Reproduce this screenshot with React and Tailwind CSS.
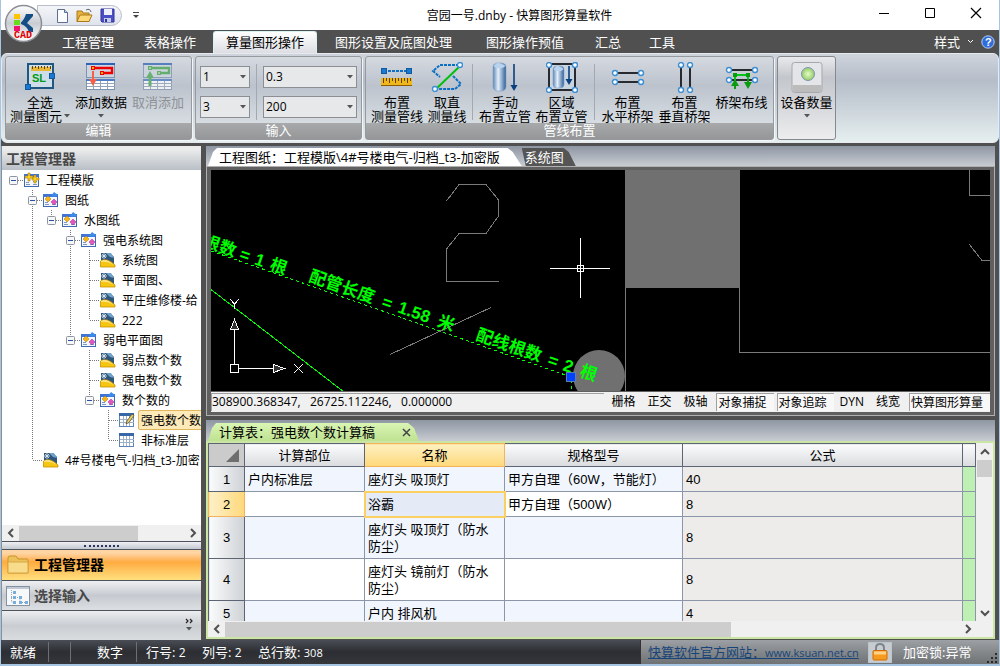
import { clsx } from "clsx";

const ui = "font-['Open_Sans','Noto_Sans_CJK_SC',sans-serif]";
const plain = "font-['Liberation_Sans','Noto_Sans_CJK_SC',sans-serif]";

/* ---------- ribbon icons ---------- */

function Dot({ x, y, r = 2.5 }) {
  return <circle cx={x} cy={y} r={r} fill="#fff" stroke="#3d8fd4" strokeWidth="1.4" />;
}

function SelectAllIcon() {
  return (
    <svg width="30" height="29" viewBox="0 0 30 29">
      <rect x="3" y="2" width="25" height="24" fill="#cfdde8" stroke="#1f5780" strokeWidth="2" />
      <rect x="6" y="5" width="20" height="4" fill="#e8b733" />
      <path d="M7.500 4v3M10.500 4v2M13.500 4v3M16.500 4v2M19.500 4v3M22.500 4v2M25.500 4v3" stroke="#5e4300" />
      <text x="7" y="20" fontSize="11" fontWeight="bold" fill="#009b14" fontFamily="Liberation Sans">
        SL
      </text>
      <rect x="0.500" y="22.500" width="5" height="5" fill="#1779d1" stroke="#135a9c" />
      <rect x="24.500" y="11.500" width="5" height="5" fill="#1779d1" stroke="#135a9c" />
    </svg>
  );
}

function DataIcon({ up }) {
  const line = up ? "#43a34d" : "#f00000";
  const node = up ? "#9fd08f" : "#ffb000";
  return (
    <svg width="30" height="29" viewBox="0 0 30 29" opacity={up ? 0.75 : 1}>
      <rect x="0.500" y="2.500" width="28" height="13" fill="#cdd6df" stroke="#7d93b2" />
      <rect x="0" y="1" width="29" height="2" fill="#2f63b5" />
      <rect x="0.500" y="17.500" width="28" height="10" fill="#fff" stroke="#7d93b2" />
      <rect x="0" y="17" width="29" height="2" fill="#4b7cc4" />
      <path d="M1 21.500h28M1 24.500h28M7.500 19v8M14.500 19v8M21.500 19v8" stroke="#93a3b8" />
      <path d="M7 6h19v5H15" fill="none" stroke={line} strokeWidth="2.4" />
      <rect x="5.500" y="4.500" width="3" height="3" fill={node} stroke={line} />
      <rect x="14.500" y="9.500" width="3" height="3" fill={node} stroke={line} />
      {up ? (
        <path d="M5.500 24V16H3l4-7 4 7H8.500v8z" fill="#4aa855" />
      ) : (
        <path d="M6 9h2v8h3l-4 7-4-7h3z" fill="#f4604a" />
      )}
    </svg>
  );
}

function MeasureIcon() {
  return (
    <svg width="32" height="29" viewBox="0 0 32 29">
      <path d="M3 9h26" stroke="#1170c4" strokeWidth="2" strokeDasharray="3 1" />
      <rect x="0.500" y="6.500" width="5" height="5" fill="#1779d1" stroke="#135a9c" />
      <rect x="25.500" y="6.500" width="5" height="5" fill="#1779d1" stroke="#135a9c" />
      <rect x="0" y="16" width="31" height="8" fill="#f0b71c" />
      <path
        d="M2.500 16v5M5.500 16v3M8.500 16v5M11.500 16v3M14.500 16v5M17.500 16v3M20.500 16v5M23.500 16v3M26.500 16v5M29.500 16v3"
        stroke="#5e4300"
      />
      <path d="M0 23.500h31" stroke="#8a5d00" />
    </svg>
  );
}

function StraightenIcon() {
  return (
    <svg width="32" height="30" viewBox="0 0 32 30">
      <path
        d="M28 3H9L2 9l7 6M22 14l8 8-6 5H5"
        fill="none"
        stroke="#0b6fc4"
        strokeWidth="2"
        strokeDasharray="3 1"
      />
      <path d="M5 27L29 4" stroke="#00bf10" strokeWidth="2" />
      <Dot x={29} y={3} />
      <Dot x={4} y={27} />
    </svg>
  );
}

function Cylinder({ x, y, w, h }) {
  return (
    <g>
      <rect x={x} y={y} width={w} height={h} rx={w / 3} fill="url(#pipe)" stroke="#7fa3cb" strokeWidth="0.600" />
      <ellipse cx={x + w / 2} cy={y + 3} rx={w / 2 - 1} ry="2" fill="#b7d3ef" />
    </g>
  );
}

function PipeIcon({ framed }) {
  return (
    <svg width="32" height="31" viewBox="0 0 32 31">
      <defs>
        <linearGradient id="pipe">
          <stop offset="0" stopColor="#5f86b4" />
          <stop offset="0.400" stopColor="#e4f0fc" />
          <stop offset="1" stopColor="#2f5e97" />
        </linearGradient>
      </defs>
      {framed ? (
        <g>
          <rect x="3" y="2" width="26" height="26" fill="#c9d5e1" stroke="#272b30" strokeWidth="2" />
          <Cylinder x={7} y={4} w={11} h={22} />
          <path d="M23 4v14" stroke="#0a3f80" strokeWidth="1.600" />
          <path d="M19.500 17h7l-3.500 6z" fill="#0a3f80" />
          <Dot x={3} y={3} />
          <Dot x={29} y={3} />
          <Dot x={3} y={28} />
          <Dot x={29} y={28} />
        </g>
      ) : (
        <g>
          <Cylinder x={4} y={1} w={13} h={28} />
          <path d="M25 2v22" stroke="#0a3f80" strokeWidth="1.600" />
          <path d="M21.500 23h7L25 29z" fill="#0a3f80" />
        </g>
      )}
    </svg>
  );
}

function TrayIcon({ kind }) {
  return (
    <svg width="34" height="31" viewBox="0 0 34 31">
      {kind === "vertical" && (
        <g>
          <path d="M13 3v24M22 3v24" stroke="#272b30" strokeWidth="2" />
          <Dot x={13} y={3} />
          <Dot x={22} y={3} />
          <Dot x={13} y={28} />
          <Dot x={22} y={28} />
        </g>
      )}
      {kind === "horizontal" && (
        <g>
          <path d="M4 11h26M4 20h26" stroke="#272b30" strokeWidth="2" />
          <Dot x={4} y={11} />
          <Dot x={30} y={11} />
          <Dot x={4} y={20} />
          <Dot x={30} y={20} />
        </g>
      )}
      {kind === "wire" && (
        <g>
          <path d="M4 8h26M4 18h26" stroke="#272b30" strokeWidth="2" />
          <Dot x={4} y={8} />
          <Dot x={30} y={8} />
          <Dot x={4} y={18} />
          <Dot x={30} y={18} />
          <path d="M10 20v-7h13v7" fill="none" stroke="#00c818" strokeWidth="2" />
          <path d="M10 17l-4 7h3v3h2v-3h3zM23 27l-4-7h3v-3h2v3h3z" fill="#0a9b10" />
          <path d="M8 11h4v4H8zM21 11h4v4h-4z" fill="#0a9b10" />
        </g>
      )}
    </svg>
  );
}

function DeviceIcon() {
  return (
    <svg width="32" height="31" viewBox="0 0 32 31">
      <defs>
        <radialGradient id="lamp">
          <stop offset="0" stopColor="#e6fbc8" />
          <stop offset="1" stopColor="#90cc64" />
        </radialGradient>
      </defs>
      <rect x="1" y="0.500" width="30" height="30" rx="2.500" fill="#e3e5e8" stroke="#a5a8ad" />
      <path d="M1.500 23h29v5q0 2-2 2h-25q-2 0-2-2z" fill="#bcbcbd" />
      <circle cx="17" cy="12" r="6.500" fill="url(#lamp)" stroke="#8493b5" />
    </svg>
  );
}

/* ---------- title bar & tabs ---------- */

function Logo() {
  return (
    <button aria-label="应用程序菜单" className="absolute left-[3px] top-[4px] z-10">
      <svg width="39" height="39" viewBox="0 0 39 39">
        <defs>
          <linearGradient id="orb" x2="0" y2="1">
            <stop offset="0" stopColor="#fff" />
            <stop offset="0.500" stopColor="#c9ccd1" />
            <stop offset="1" stopColor="#fff" />
          </linearGradient>
        </defs>
        <circle cx="19.500" cy="19.500" r="18" fill="url(#orb)" stroke="#8b8f95" strokeWidth="1.500" />
        <rect x="10" y="10" width="6" height="5" fill="#ffc400" />
        <rect x="10" y="16" width="6" height="5" fill="#6bdc1d" />
        <rect x="10" y="22" width="6" height="5" fill="#f0146e" />
        <path d="M17 18.500Q20 16 22 10h7v2l-6 7 6 5v4h-4Q23 22 17 20z" fill="#134f86" />
        <text x="10" y="34" fontSize="10" fontWeight="bold" fill="#e00000" fontFamily="Liberation Mono">
          CAD
        </text>
      </svg>
    </button>
  );
}

function TitleBar() {
  return (
    <header className="relative flex h-[30px] shrink-0 bg-white">
      <Logo />
      <div className="flex w-[177px] shrink-0 items-start pl-9">
        <div className="mt-[5px] flex h-[21px] w-[85px] items-center gap-[7px] rounded-r-full border border-[#b9bfca] bg-linear-to-b from-[#f4f5f8] to-[#dfe3ec] pl-[18px]">
          <button aria-label="新建">
            <svg width="13" height="16" viewBox="0 0 13 16">
              <path d="M1.500 1.500h7l3 3v10h-10z" fill="#fbfcff" stroke="#5f6e8e" />
              <path d="M8.500 1.500v3h3" fill="#c6d4ea" stroke="#5f6e8e" />
            </svg>
          </button>
          <button aria-label="打开">
            <svg width="17" height="15" viewBox="0 0 17 15">
              <path d="M1 13.500V3h5l1 2h6v8.500z" fill="#e8b23e" stroke="#a87a1b" />
              <path d="M1 13.500L4 7h12l-3 6.500z" fill="#ffd877" stroke="#a87a1b" />
              <path d="M10 2q4-2 5 2" fill="none" stroke="#54606f" />
            </svg>
          </button>
          <button aria-label="保存">
            <svg width="15" height="15" viewBox="0 0 15 15">
              <path d="M1 1h13v13H2l-1-1z" fill="#4b4fc4" stroke="#32359a" />
              <path d="M4 1h8v6H4z" fill="#eef1fb" />
              <path d="M4 10h7v4H4z" fill="#c5cdea" />
              <path d="M5 11h2v3H5z" fill="#32359a" />
            </svg>
          </button>
        </div>
        <button aria-label="自定义快速访问工具栏" className="mt-[11px] ml-[9px]">
          <svg width="9" height="8" viewBox="0 0 9 8">
            <path d="M2 1.500h6" stroke="#444" />
            <path d="M2 4h6L5 7z" fill="#444" />
          </svg>
        </button>
      </div>
      <h1 className="flex-1 text-center text-xs leading-8 whitespace-nowrap text-black">
        宫园一号.dnby - 快算图形算量软件
      </h1>
      <div className="flex [&>button]:flex [&>button]:w-[46px] [&>button]:items-center [&>button]:justify-center [&>button]:pb-1">
        <button aria-label="最小化">
          <svg width="12" height="12"><path d="M1 6.500h10" stroke="#000" /></svg>
        </button>
        <button aria-label="最大化">
          <svg width="12" height="12"><path d="M1.500 1.500h9v9h-9z" fill="none" stroke="#000" /></svg>
        </button>
        <button aria-label="关闭">
          <svg width="12" height="12"><path d="M1 1l10 10M11 1L1 11" stroke="#000" strokeWidth="1.200" /></svg>
        </button>
      </div>
    </header>
  );
}

const menus = [
  { name: "工程管理", pad: "px-[15px]" },
  { name: "表格操作", pad: "px-[15px]" },
  { name: "算量图形操作", active: true },
  { name: "图形设置及底图处理", pad: "px-[17px]" },
  { name: "图形操作预值", pad: "px-[17px]" },
  { name: "汇总", pad: "px-[14px]" },
  { name: "工具", pad: "px-[14px]" },
];

function MenuBar() {
  return (
    <nav className="flex h-[23px] shrink-0 bg-[#505050] pl-[46px] text-[13px] leading-6 whitespace-nowrap text-white">
      {menus.map((m) => (
        <button
          key={m.name}
          className={clsx(
            m.pad,
            m.active &&
              "mt-px mr-px ml-[2px] rounded-t-[3px] border border-b-0 border-[#d8f2f2] bg-linear-to-b from-white to-[#dcdee3] px-[12px] leading-[21px] text-black"
          )}
        >
          {m.name}
        </button>
      ))}
      <div className="ml-auto flex items-center gap-[7px] pr-[4px]">
        <button className="flex items-center gap-[7px] leading-[20px]">
          样式
          <svg width="7" height="5"><path d="M1 1l2.500 2.500L6 1" fill="none" stroke="#fff" /></svg>
        </button>
        <button aria-label="帮助">
          <svg width="14" height="14" viewBox="0 0 14 14">
            <circle cx="7" cy="7" r="6.200" fill="#2f6ddb" stroke="#b8cdf5" />
            <text x="4" y="11" fontSize="11" fontWeight="bold" fill="#fff" fontFamily="Liberation Sans">?</text>
          </svg>
        </button>
      </div>
    </nav>
  );
}

/* ---------- ribbon ---------- */

function Arrow() {
  return (
    <svg width="6" height="4" className="inline-block">
      <path d="M0 0h6L3 3.500z" fill="#555" />
    </svg>
  );
}

function Tool({ icon, lines, width, disabled }) {
  return (
    <button
      disabled={disabled}
      className={clsx(
        "flex shrink-0 flex-col items-center pt-[5px] text-[13px] leading-[14px] whitespace-nowrap",
        width,
        disabled ? "text-[#8e9196]" : "text-black"
      )}
    >
      <span className="flex h-[33px] items-start">{icon}</span>
      {lines.map((l, i) => (
        <span key={i} className="flex h-[14px] items-center gap-[2px]">
          {l === "▾" ? <Arrow /> : l}
        </span>
      ))}
    </button>
  );
}

function Group({ title, children, width }) {
  return (
    <section
      className={clsx(
        "flex shrink-0 flex-col rounded-[3px] border border-[#96999e] bg-linear-to-b from-[#d5d9e0] via-[#bcc3cd] via-35% to-[#e2e8ea] shadow-[1px_1px_0_#f3f5f6]",
        width
      )}
    >
      <div className="flex flex-1 px-[2px]">{children}</div>
      <h2 className="h-[16px] bg-linear-to-b from-[#a7a9ab] to-[#949698] text-center text-[13px] leading-[15px] text-white">
        {title}
      </h2>
    </section>
  );
}

function Combo({ label, value, width }) {
  return (
    <span className={clsx("relative flex h-[22px] items-center", width)}>
      <select
        aria-label={label}
        defaultValue={value}
        className="h-full w-full appearance-none border border-[#8b8e93] bg-[#e7e8ea] pl-[2px] text-xs leading-5 text-black"
      >
        <option>{value}</option>
      </select>
      <span className="pointer-events-none absolute right-[4px] flex">
        <Arrow />
      </span>
    </span>
  );
}

function Sep() {
  return <span className="mx-[4px] mt-[7px] h-[56px] w-px shrink-0 bg-[#a4a9b0]" />;
}

function Ribbon() {
  return (
    <div className="flex h-[90px] shrink-0 gap-[3px] rounded-md border border-[#e6e9ee] bg-linear-to-b from-[#cfd4dc] via-[#b5bdc9] via-30% to-[#e6efef] py-[2px] pl-[3px]">
      <Group title="编辑" width="w-[187px]">
        <Tool
          width="w-[64px]"
          icon={<SelectAllIcon />}
          lines={["全选", <>测量图元<Arrow /></>]}
        />
        <Tool width="w-[58px]" icon={<DataIcon />} lines={["添加数据", "▾"]} />
        <Tool width="w-[56px]" icon={<DataIcon up />} lines={["取消添加"]} disabled />
      </Group>
      <Group title="输入" width="w-[167px]">
        <div className="flex flex-1 gap-[6px] px-[2px]">
          <div className="flex flex-col gap-2 pt-[9px]">
            <Combo label="行数" value="1" width="w-[50px]" />
            <Combo label="列数" value="3" width="w-[50px]" />
          </div>
          <span className="mt-[7px] h-[56px] w-px bg-[#a4a9b0]" />
          <div className="flex flex-1 flex-col gap-2 pt-[9px]">
            <Combo label="比例" value="0.3" width="w-full" />
            <Combo label="高度" value="200" width="w-full" />
          </div>
        </div>
      </Group>
      <Group title="管线布置" width="w-[409px]">
        <Tool width="w-[58px]" icon={<MeasureIcon />} lines={["布置", "测量管线"]} />
        <Tool width="w-[42px]" icon={<StraightenIcon />} lines={["取直", "测量线"]} />
        <Sep />
        <Tool width="w-[56px]" icon={<PipeIcon />} lines={["手动", "布置立管"]} />
        <Tool width="w-[57px]" icon={<PipeIcon framed />} lines={["区域", "布置立管"]} />
        <Sep />
        <Tool width="w-[57px]" icon={<TrayIcon kind="horizontal" />} lines={["布置", "水平桥架"]} />
        <Tool width="w-[57px]" icon={<TrayIcon kind="vertical" />} lines={["布置", "垂直桥架"]} />
        <Tool width="w-[57px]" icon={<TrayIcon kind="wire" />} lines={["桥架布线"]} />
      </Group>
      <section className="flex rounded-[3px] border border-[#85888d] bg-linear-to-b from-[#e9eaec] via-[#c3c6cc] via-25% to-[#ededee]">
        <Tool width="w-[57px]" icon={<DeviceIcon />} lines={["设备数量", "▾"]} />
      </section>
    </div>
  );
}

/* ---------- project tree ---------- */

// guides: for every ancestor level, whether its line goes on past this row
const tree = [
  { guides: [], text: "工程模版", icon: "root", open: true },
  { guides: [0], text: "图纸", icon: "set", open: true, more: true, up: true },
  { guides: [0, 1], text: "水图纸", icon: "set", open: true, up: true },
  { guides: [0, 1, 0], text: "强电系统图", icon: "set", open: true, more: true, up: true },
  { guides: [0, 1, 0, 1], text: "系统图", icon: "dwg", more: true, up: true },
  { guides: [0, 1, 0, 1], text: "平面图、", icon: "dwg", more: true, up: true },
  { guides: [0, 1, 0, 1], text: "平庄维修楼-给", icon: "dwg", more: true, up: true },
  { guides: [0, 1, 0, 1], text: "222", icon: "dwg", up: true },
  { guides: [0, 1, 0], text: "弱电平面图", icon: "set", open: true, up: true },
  { guides: [0, 1, 0, 0], text: "弱点数个数", icon: "dwg", more: true, up: true },
  { guides: [0, 1, 0, 0], text: "强电数个数", icon: "dwg", more: true, up: true },
  { guides: [0, 1, 0, 0], text: "数个数的", icon: "set", open: true, up: true },
  { guides: [0, 1, 0, 0, 0], text: "强电数个数", icon: "edit", more: true, up: true, selected: true },
  { guides: [0, 1, 0, 0, 0], text: "非标准层", icon: "grid", up: true },
  { guides: [0], text: "4#号楼电气-归档_t3-加密", icon: "dwg", up: true },
];

function TreeIcon({ kind }) {
  if (kind === "dwg") {
    return (
      <svg width="16" height="16" viewBox="0 0 16 16" className="shrink-0">
        <path d="M1 1h9l4 4v9H1z" fill="#2f5679" />
        <path d="M4 1v6M1 4h6M2 2l4 4M6 2L2 6" stroke="#e3eef7" strokeWidth="0.800" />
        <path d="M6 1h5l3 5-4-1z" fill="#6fa3cb" />
        <path d="M0.500 15V9q6-4 14.500 4v2z" fill="#f6c511" stroke="#c79300" strokeWidth="0.800" />
        <path d="M1 9q5-3 13 4Q8 9 1 10z" fill="#fbe48a" />
      </svg>
    );
  }
  if (kind === "grid" || kind === "edit") {
    return (
      <svg width="16" height="16" viewBox="0 0 16 16" className="shrink-0">
        <rect x="0.500" y="1.500" width="14" height="13" fill="#fff" stroke="#5f83b5" />
        <rect x="0" y="1" width="15" height="3" fill="#3867a8" />
        <path d="M1 7.500h14M1 10.500h14M4.500 4v10M7.500 4v10M10.500 4v10" stroke="#9fb1c8" />
        {kind === "edit" && <path d="M7 12l1-3 5-7 2 1.500-5 7z" fill="#f1cf5b" stroke="#55503a" strokeWidth="0.800" />}
      </svg>
    );
  }
  return (
    <svg width="16" height="16" viewBox="0 0 16 16" className="shrink-0">
      <rect x="0.500" y="2.500" width="14" height="12" fill="#f1f6ff" stroke="#3f68b5" />
      <rect x="0" y="2" width="15" height="3" fill="#3f74d8" />
      <path d="M2 12.500h4M2 10.500h3M9 12.500h4M9 9.500h4" stroke="#7f97c0" />
      {kind === "root" ? (
        <path d="M4 1h2v3h3v2H6v3H4V6H1V4h3zM10 3h2v3h3v2h-3v3h-2V8H8V6h2z" fill="#ffd21e" stroke="#a87a00" strokeWidth="0.600" />
      ) : (
        <g>
          <path d="M5 4l3 3-3 3-3-3z" fill="#f5b417" stroke="#b07a00" strokeWidth="0.500" />
          <path d="M11 7l3 3-3 3-3-3z" fill="#e455c0" stroke="#9c2f86" strokeWidth="0.500" />
          <path d="M11 0l4 3-3 2-4-1z" fill="#3c8be6" />
        </g>
      )}
    </svg>
  );
}

function Branch({ up, more, open }) {
  return (
    <svg width="15" height="20" viewBox="0 0 15 20">
      <g stroke="#777" strokeDasharray="1 1" fill="none">
        {up && <path d="M4.500 0v10" />}
        {more && <path d="M4.500 10v10" />}
        {(up || open) && <path d="M5 10.500h10" />}
      </g>
      {open && (
        <g>
          <rect x="0.500" y="6.500" width="8" height="8" rx="1" fill="#f6f7f9" stroke="#8d949e" />
          <path d="M2 10.500h5" stroke="#2b4fa5" />
        </g>
      )}
    </svg>
  );
}

function TreeRow({ node }) {
  return (
    <li className="flex h-5 items-center">
      {node.guides.map((on, i) => (
        <svg key={i} width="19" height="20" className="shrink-0">
          {on === 1 && <path d="M4.500 0v20" stroke="#777" strokeDasharray="1 1" />}
        </svg>
      ))}
      {node.open ? (
        <button aria-label={"折叠 " + node.text} className="shrink-0">
          <Branch {...node} />
        </button>
      ) : (
        <span className="shrink-0">
          <Branch {...node} />
        </span>
      )}
      <TreeIcon kind={node.icon} />
      <span
        className={clsx(
          "ml-[3px] h-5 flex-1 border px-[2px] leading-[19px]",
          node.selected ? "rounded-l-[2px] border-[#dfb65a] bg-[#fdeab8]" : "border-transparent"
        )}
      >
        {node.text}
      </span>
    </li>
  );
}

function Chevron({ dir }) {
  const d = {
    left: "M8 2L4 6l4 4",
    right: "M4 2l4 4-4 4",
    up: "M2 8l4-4 4 4",
    down: "M2 4l4 4 4-4",
  };
  return (
    <svg width="12" height="12">
      <path d={d[dir]} fill="none" stroke="#505050" strokeWidth="2" />
    </svg>
  );
}

function HScroll({ thumb }) {
  return (
    <div className="flex h-[16px] shrink-0 items-center bg-[#f0f0f0]">
      <button aria-label="向左滚动" className="flex w-[17px] justify-center"><Chevron dir="left" /></button>
      <div className="h-[15px] flex-1">
        <div className={clsx("h-full bg-[#cdcdcd]", thumb)} />
      </div>
      <button aria-label="向右滚动" className="flex w-[17px] justify-center"><Chevron dir="right" /></button>
    </div>
  );
}

function Sidebar() {
  return (
    <aside className="flex w-[200px] shrink-0 flex-col border-l border-[#8b8e93] bg-white">
      <div className="h-[3px] bg-[#ececec]" />
      <h2 className="h-[21px] shrink-0 bg-linear-to-b from-[#eceded] to-[#b9bfc6] pl-[4px] text-sm leading-[19px] font-bold text-[#484848]">
        工程管理器
      </h2>
      <ul className="min-h-0 flex-1 overflow-hidden pl-[7px] text-xs whitespace-nowrap text-black">
        {tree.map((n, i) => (
          <TreeRow key={i} node={n} />
        ))}
      </ul>
      <HScroll thumb="w-[72%]" />
      <div className="flex h-[9px] shrink-0 items-center justify-center border-y border-[#4e525c] bg-linear-to-b from-[#eef0f4] to-[#c4c8d0]">
        <span className="w-[35px] border-t-2 border-dotted border-[#2c3560]" />
      </div>
      <button className="flex h-[30px] shrink-0 items-center gap-[5px] bg-linear-to-b from-[#ffd5a4] from-10% via-[#ffab3f] via-40% to-[#ffe07d] pl-[5px] text-sm leading-5 font-bold text-black">
        <svg width="22" height="20" viewBox="0 0 22 20">
          <path d="M1 3q0-2 2-2h6l2 3h9q1 0 1 1v13H1z" fill="#ecc05a" stroke="#c99528" />
          <path d="M1 18V7h20v11z" fill="#f8dc8c" stroke="#d6a945" />
        </svg>
        工程管理器
      </button>
      <button className="flex h-[31px] shrink-0 items-center gap-[4px] border-y border-[#4e525c] bg-linear-to-b from-[#eff0f2] via-[#c6cad0] via-50% to-[#dcdfe2] pl-[4px] text-sm leading-5 font-bold text-[#484848]">
        <svg width="24" height="20" viewBox="0 0 24 20">
          <rect x="0.500" y="0.500" width="23" height="19" fill="#f6f8fa" stroke="#8590a0" />
          <path d="M1 2h22" stroke="#c1c9d4" strokeWidth="2" />
          <path d="M5.500 4v12H9M5 6.500h3M5 11.500h9v5h6" fill="none" stroke="#9aa4b2" strokeDasharray="1 1" />
          <path d="M7 5h3v3H7zM7 10h3v3H7zM7 15h3v3H7zM13 10h3v3h-3zM13 15h3v3h-3zM19 15h3v3h-3z" fill="#78aedb" />
        </svg>
        选择输入
      </button>
      <div className="flex h-[29px] shrink-0 justify-end bg-linear-to-b from-[#eceef0] via-[#c9cdd2] via-50% to-[#dadddf] pr-2">
        <button aria-label="配置按钮" className="flex w-2 flex-col items-center pt-[7px]">
          <svg width="8" height="6"><path d="M1 1l2 2-2 2M5 1l2 2-2 2" fill="none" stroke="#222" strokeWidth="1.200" /></svg>
          <span className="mt-[3px] flex"><Arrow /></span>
        </button>
      </div>
    </aside>
  );
}

/* ---------- drawing area ---------- */

function Drawing() {
  return (
    <svg className="block h-full w-full bg-black" aria-label="工程图纸">
      <g transform="translate(-211 -170)">
        <g fill="none" stroke="#7a7a7a" shapeRendering="crispEdges">
          <path d="M446.500 201L459 184.500h27L498.500 200v16L486 233.500h-27L446.500 249v32.500H499" />
          <path d="M390 354.500l101-47" />
          <path d="M625.500 288v110M739.500 288v64.500H1900M969.500 170v25.500H1900M969 244l13 16.500h900" />
        </g>
        <rect x="625" y="170" width="115" height="118" fill="#707070" />
        <circle cx="599" cy="376" r="26" fill="#707070" />
        <g stroke="#00ff00" shapeRendering="crispEdges" fill="none">
          <path d="M211 251l360 126v20" strokeDasharray="3 3" />
          <path d="M211 289.500L344 392" />
        </g>
        <g
          fill="#00ff00"
          fontSize="17"
          fontWeight="bold"
          fontFamily="'Liberation Sans','Noto Sans CJK SC',sans-serif"
          transform="translate(308 281) rotate(19.3)"
        >
          <text x="-112" y="2">根数</text>
          <text x="-73" y="2">=</text>
          <text x="-57" y="2">1</text>
          <text x="-41" y="2">根</text>
          <text x="0" y="0">配管长度</text>
          <text x="77" y="0">=</text>
          <text x="94" y="0">1.58</text>
          <text x="136" y="0">米</text>
          <text x="177" y="0">配线根数</text>
          <text x="253" y="0">=</text>
          <text x="269" y="0">2</text>
          <text x="287" y="0">根</text>
        </g>
        <rect x="566.500" y="372.500" width="9" height="9" fill="#0040ff" stroke="#5b7fa8" />
        <g fill="none" stroke="#fff" shapeRendering="crispEdges">
          <path d="M580.500 238v60M550 268.500h60M577.500 265.500h6v6h-6z" />
          <path d="M230.500 364.500h8v8h-8zM234.500 364v-44M239 368.500h44" />
          <path d="M230.500 329.500l4-10 4 10zM273.500 364.500l11 4-11 4z" fill="#333" />
          <path d="M230 299l4.500 5 4.500-5M234.500 304v5M294 364l9 9M303 364l-9 9" />
        </g>
      </g>
    </svg>
  );
}

const snaps = [
  { name: "栅格", css: "px-[6px]" },
  { name: "正交", css: "px-[6px]" },
  { name: "极轴", css: "px-[6px]" },
  { name: "对象捕捉", css: "pl-px pr-[7px] mx-[3px]", on: true },
  { name: "对象追踪", css: "pl-px pr-[7px]", on: true },
  { name: "DYN", css: "px-[6px]" },
  { name: "线宽", css: "px-[6px]" },
  { name: "快算图形算量", css: "pl-px pr-[7px] ml-[3px]", on: true },
];

function DrawingPane() {
  return (
    <section className="flex h-[270px] shrink-0 flex-col">
      <div className="flex h-[20px] shrink-0 items-end bg-linear-to-b from-[#8e96a3] to-[#c8ccd2] pl-[2px] text-[13px] whitespace-nowrap">
        <button className="h-[18px] bg-white pr-[22px] pl-[11px] leading-[16px] text-black [clip-path:polygon(5px_4px,9px_0,calc(100%-14px)_0,calc(100%-9px)_4px,100%_100%,0_100%)]">
          工程图纸：工程模版\4#号楼电气-归档_t3-加密版
        </button>
        <button className="h-[18px] bg-[#555] pr-3 pl-[3px] leading-[16px] text-white [clip-path:polygon(0_0,calc(100%-12px)_0,calc(100%-7px)_4px,100%_100%,4px_100%)]">
          系统图
        </button>
      </div>
      <div className="flex min-h-0 flex-1 flex-col border border-[#b0b0b0] bg-[#606060] px-[4px] py-[3px]">
        <div className="min-h-0 flex-1">
          <Drawing />
        </div>
        <div className="mt-px flex h-[20px] shrink-0 items-center bg-[#f0f0f0] text-xs leading-[16px] whitespace-nowrap text-black">
          <output className="mr-[1px] h-[18px] flex-1 overflow-hidden border-t border-l border-[#a0a0a0] whitespace-pre">
            308900.368347,   26725.112246,   0.000000
          </output>
          {snaps.map((s) => (
            <button
              key={s.name}
              className={clsx("h-[18px] leading-[16px]", s.css, s.on && "border-t border-l border-[#a0a0a0] bg-[#f8f8f8]")}
            >
              {s.name}
            </button>
          ))}
        </div>
      </div>
    </section>
  );
}

/* ---------- calculation sheet ---------- */

const rows = [
  ["户内标准层", "座灯头 吸顶灯", "甲方自理（60W，节能灯）", "40"],
  ["", "浴霸", "甲方自理（500W）", "8"],
  ["", "座灯头 吸顶灯（防水防尘）", "", "8"],
  ["", "座灯头 镜前灯（防水防尘）", "", "8"],
  ["", "户内 排风机", "", "4"],
];

const heights = ["h-[25px]", "h-[25px]", "h-[42px]", "h-[42px]", "h-[25px]"];

function Sheet() {
  const th = "border border-[#5d6474] font-normal bg-linear-to-b from-[#fcfcfd] to-[#d9dbde]";
  const td = "border border-[#8d96a8] px-[3px] py-0";
  return (
    <table className={clsx("w-full table-fixed border-collapse text-[13px] leading-[17px] text-black", plain)}>
      <colgroup>
        <col className="w-[36px]" />
        <col className="w-[120px]" />
        <col className="w-[140px]" />
        <col className="w-[178px]" />
        <col />
        <col className="w-[13px]" />
      </colgroup>
      <thead>
        <tr className="h-[23px]">
          <td className="border border-[#5d6474] bg-[#cbcbcb] p-0">
            <svg width="13" height="13" className="ml-[17px]"><path d="M13 0v13H0z" fill="#6e6e6e" /></svg>
          </td>
          <th className={th}>计算部位</th>
          <th className="border border-[#f4b25c] bg-linear-to-b from-[#fdf0c0] to-[#ffd878] font-normal">名称</th>
          <th className={th}>规格型号</th>
          <th className={th}>公式</th>
          <th className={th} />
        </tr>
      </thead>
      <tbody>
        {rows.map((r, i) => (
          <tr key={i} className={clsx(heights[i], i % 2 ? "bg-white" : "bg-[#f1f6fe]")}>
            <th
              className={clsx(
                "border font-normal",
                i === 1
                  ? "border-[#f4b25c] bg-linear-to-r from-[#fdf0c8] to-[#ffd878]"
                  : "border-[#5d6474] bg-linear-to-r from-[#fafbfc] to-[#cfd2d6]"
              )}
            >
              {i + 1}
            </th>
            <td className={td}>{r[0]}</td>
            <td className={clsx(td, i === 1 && "bg-[#e4eaf6] outline-2 -outline-offset-1 outline-[#fbd062]")}>{r[1]}</td>
            <td className={td}>{r[2]}</td>
            <td className={clsx(td, "bg-[#eeecea]")}>{r[3]}</td>
            <td className="border border-[#8d96a8] bg-[#bff0b3] p-0" />
          </tr>
        ))}
      </tbody>
    </table>
  );
}

function SheetPane() {
  return (
    <section className="flex min-h-0 flex-1 flex-col">
      <div className="flex h-[21px] shrink-0 items-end bg-linear-to-b from-[#8e96a3] to-[#c8ccd2] pl-[2px]">
        <div className="flex h-[18px] items-center bg-linear-to-b from-[#daf5b4] to-[#bfe291] pr-2 pl-[11px] text-[13px] leading-[17px] whitespace-nowrap text-black [clip-path:polygon(4px_5px,8px_0,calc(100%-11px)_0,calc(100%-5px)_5px,100%_100%,0_100%)]">
          <button>计算表：强电数个数计算稿</button>
          <button aria-label="关闭计算表" className="ml-[27px]">
            <svg width="9" height="9"><path d="M1 1l7 7M8 1L1 8" stroke="#444" strokeWidth="1.500" /></svg>
          </button>
        </div>
      </div>
      <div className="flex min-h-0 flex-1 flex-col border-2 border-[#cbe5a5] bg-[#f0f0f0]">
        <div className="flex min-h-0 flex-1">
          <div className="min-w-0 flex-1 overflow-hidden">
            <Sheet />
          </div>
          <div className="flex w-[17px] shrink-0 flex-col items-center bg-[#f0f0f0]">
            <button aria-label="向上滚动" className="flex h-[17px] items-center"><Chevron dir="up" /></button>
            <div className="w-[15px] flex-1">
              <div className="h-[17px] bg-[#cdcdcd]" />
            </div>
            <button aria-label="向下滚动" className="flex h-[17px] items-center"><Chevron dir="down" /></button>
          </div>
        </div>
        <div className="pr-[17px]">
          <HScroll thumb="w-[69%]" />
        </div>
      </div>
    </section>
  );
}

/* ---------- status bar ---------- */

function StatusBar() {
  const bar = "h-[20px] w-px bg-[#6b6f76]";
  return (
    <footer className="flex h-[24px] shrink-0 text-[13px] leading-[22px] whitespace-nowrap text-white">
      <div className="flex flex-1 items-center bg-linear-to-b from-[#4a4d55] via-[#2c2e33] via-50% to-[#35373b] pl-[9px]">
        <span className="w-[38px]">就绪</span>
        <span className={bar} />
        <span className={clsx(bar, "ml-[21px]")} />
        <span className="ml-[26px] w-[39px]">数字</span>
        <span className={bar} />
        <span className="ml-[9px] w-[56px]">行号: <span className="text-xs">2</span></span>
        <span className="w-[56px]">列号: <span className="text-xs">2</span></span>
        <span>总行数: <span className="text-[11px]">308</span></span>
      </div>
      <div className="flex w-[359px] items-center border-l border-[#333] bg-linear-to-b from-[#9da0a4] via-[#85888b] via-50% to-[#707376] pl-[7px]">
        <a href="#site" className="w-[214px] text-[#17457a] underline">
          快算软件官方网站：<span className="text-[11px]">www.ksuan.net.cn</span>
        </a>
        <button aria-label="加密锁" className="ml-[6px] flex h-[21px] w-[24px] items-center justify-center border border-[#b9c6d0] bg-[#c8ccd0]">
          <svg width="16" height="18" viewBox="0 0 16 18">
            <path d="M4 9V5q0-4 4-4t4 4v4" fill="none" stroke="#7d848c" strokeWidth="2" />
            <rect x="1" y="7.500" width="14" height="9.500" rx="1" fill="#f79a1e" stroke="#d06f00" />
            <path d="M2 8.500h12v3H2z" fill="#ffd28a" />
          </svg>
        </button>
        <span className="ml-[11px]">加密锁:异常</span>
        <svg width="11" height="11" className="mt-auto mr-px ml-auto">
          <path d="M8 0h2v2H8zM4 4h2v2H4zM8 4h2v2H8zM0 8h2v2H0zM4 8h2v2H4zM8 8h2v2H8z" fill="#2b2b2b" />
        </svg>
      </div>
    </footer>
  );
}

export default function App() {
  return (
    <div className={clsx("flex h-screen flex-col overflow-hidden border border-t-0 border-b-2 border-[#a5c5e3] bg-[#505050]", ui)}>
      <TitleBar />
      <MenuBar />
      <Ribbon />
      <main className="flex min-h-0 flex-1 pt-[3px]">
        <Sidebar />
        <div className="ml-[5px] flex min-w-0 flex-1 flex-col gap-[4px] pr-[4px] pb-px">
          <DrawingPane />
          <SheetPane />
        </div>
      </main>
      <StatusBar />
    </div>
  );
}
